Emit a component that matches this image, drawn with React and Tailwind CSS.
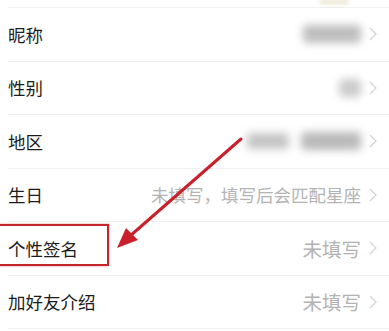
import React from "react";

const rows = [
  { label: "昵称", blur: "nick" },
  { label: "性别", blur: "gender" },
  { label: "地区", blur: "region" },
  { label: "生日", value: "未填写，填写后会匹配星座", small: true },
  { label: "个性签名", value: "未填写" },
  { label: "加好友介绍", value: "未填写" },
];

function Chevron() {
  return (
    <svg width="8" height="14" viewBox="0 0 8 14" className="shrink-0">
      <polyline points="1,1 7,7 1,13" fill="none" stroke="#d2d2d2" strokeWidth="1.2" />
    </svg>
  );
}

function BlurValue({ kind }) {
  if (kind === "nick") {
    return <div className="w-[58px] h-[18px] rounded bg-[#bdbdbd] blur-[4px]" />;
  }
  if (kind === "gender") {
    return <div className="w-[22px] h-[18px] rounded bg-[#cbcbcb] blur-[4px]" />;
  }
  return (
    <div className="flex items-center gap-[12px]">
      <div className="w-[42px] h-[16px] rounded bg-[#c4c4c4] blur-[4px]" />
      <div className="w-[60px] h-[18px] rounded bg-[#b9b9b9] blur-[4px]" />
    </div>
  );
}

export default function App() {
  return (
    <div className="relative w-[389px] h-[331px] overflow-hidden bg-white font-['Noto_Sans_CJK_SC',sans-serif]">
      <div className="h-[7px] flex justify-end pr-[40px]">
        <div className="w-[30px] h-[4px] rounded-b-full bg-[#e9e3c8] blur-[2px]" />
      </div>
      <div className="ml-[8px] border-t border-[#f1f1f1]">
        {rows.map((row) => (
          <div
            key={row.label}
            className="h-[53.5px] border-b border-[#f1f1f1] flex items-center justify-between pr-[12px]"
          >
            <span className="text-[17.5px] text-[#1c1c1c] leading-none">{row.label}</span>
            <div className="flex items-center gap-[8px]">
              {row.blur ? (
                <BlurValue kind={row.blur} />
              ) : (
                <span
                  className={`leading-none text-[#b3b3b3] ${
                    row.small ? "text-[17.5px]" : "text-[19.5px]"
                  }`}
                >
                  {row.value}
                </span>
              )}
              <Chevron />
            </div>
          </div>
        ))}
      </div>

      {/* highlight box */}
      <div className="absolute left-[-3px] top-[224px] w-[112px] h-[42px] border-2 border-[#c4252d] shadow-[0_0_2px_rgba(196,37,45,0.5)]" />

      {/* arrow */}
      <svg className="absolute left-0 top-0" width="389" height="331" viewBox="0 0 389 331">
        <line x1="241" y1="139" x2="130" y2="236" stroke="#c9212b" strokeWidth="3" strokeLinecap="round" />
        <polygon points="117,248 126,228 138,240" fill="#c9212b" />
      </svg>
    </div>
  );
}
